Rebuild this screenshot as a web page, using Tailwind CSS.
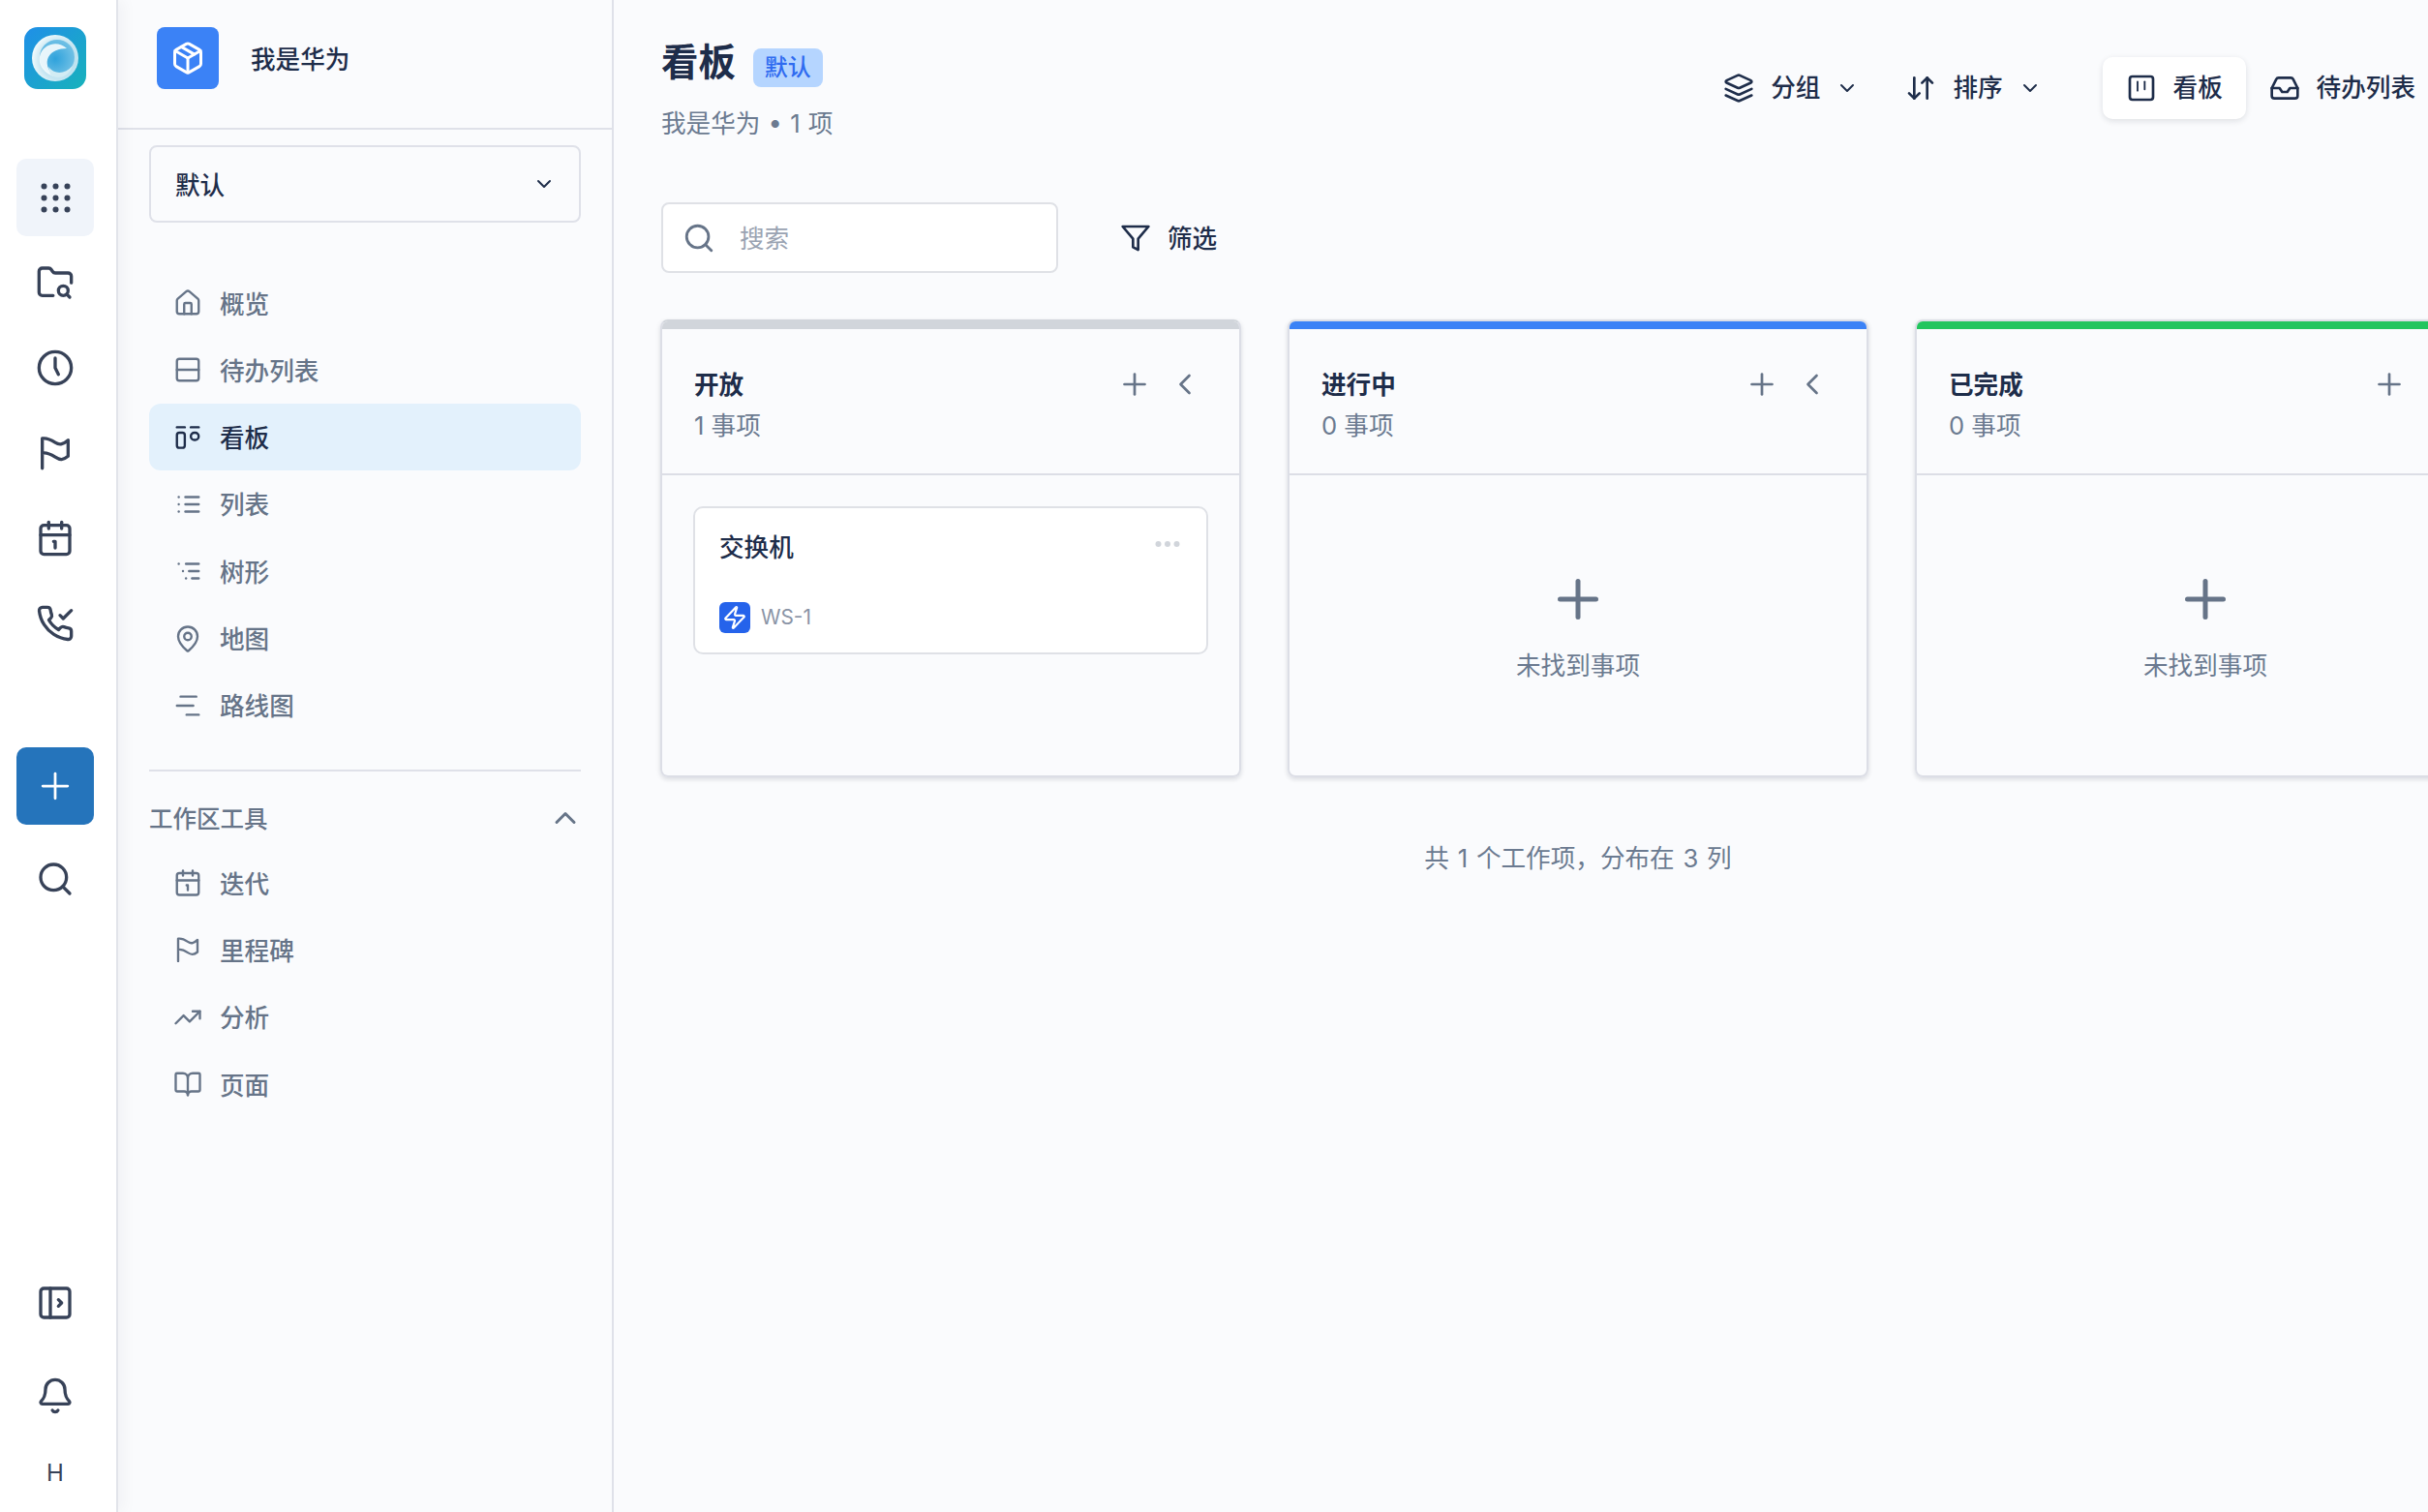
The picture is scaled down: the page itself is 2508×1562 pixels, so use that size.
<!DOCTYPE html>
<html lang="zh-CN">
<head>
  <meta charset="UTF-8">
  <meta name="viewport" content="width=device-width, initial-scale=1.0">
  <title>看板</title>
  <script src="https://cdn.jsdelivr.net/npm/@tailwindcss/browser@4"></script>
</head>
<body class="bg-[#fafbfd]">
<div class="flex w-[2508px] h-[1562px] overflow-hidden bg-[#fafbfd] text-[#1e2d4a] text-[25.6px] leading-10 font-[Inter,'Noto_Sans_CJK_SC',sans-serif]">

  <!-- icon rail -->
  <aside class="relative z-10 flex flex-col items-start w-[122px] shrink-0 pt-7 pl-[17px] bg-white border-r-2 border-[#e2e4ea] shadow-[6px_0_14px_rgba(15,23,42,0.04)] text-[#374258]">
    <svg class="w-16 h-16 ml-2" viewBox="0 0 64 64">
      <defs>
        <linearGradient id="logoBg" x1="0" y1="0" x2="1" y2="1"><stop offset="0" stop-color="#1f8fe8"/><stop offset="1" stop-color="#18b2bb"/></linearGradient>
        <radialGradient id="logoBall" cx="0.6" cy="0.55" r="0.6"><stop offset="0" stop-color="#9fd5ea"/><stop offset="0.7" stop-color="#c6e6f2"/><stop offset="1" stop-color="#f0fafc"/></radialGradient>
        <radialGradient id="logoEye" cx="0.45" cy="0.55" r="0.6"><stop offset="0" stop-color="#2ea2dc"/><stop offset="1" stop-color="#76c3e6"/></radialGradient>
      </defs>
      <rect width="64" height="64" rx="14" fill="url(#logoBg)"/>
      <circle cx="32" cy="32" r="24" fill="url(#logoBall)"/>
      <circle cx="34" cy="31" r="18" fill="url(#logoEye)"/>
      <path d="M44 22C36 14 22 16 17 27c-4 10 2 20 14 24-7-7-9-14-6-20 3-6 11-9 19-9z" fill="#f4fbfd" opacity="0.92"/>
      <path d="M25 41c6 8 17 8 25-1-4 12-16 15-23 9z" fill="#d2ecf4"/>
    </svg>

    <nav class="flex flex-col gap-2 mt-[72px]">
      <button class="flex items-center justify-center w-20 h-20 rounded-[10px] bg-[#f0f4fa]">
        <svg class="w-[33px] h-[33px]" viewBox="0 0 33 33" fill="currentColor"><circle cx="4.500" cy="4.500" r="3"/><circle cx="16.500" cy="4.500" r="3"/><circle cx="28.500" cy="4.500" r="3"/><circle cx="4.500" cy="16.500" r="3"/><circle cx="16.500" cy="16.500" r="3"/><circle cx="28.500" cy="16.500" r="3"/><circle cx="4.500" cy="28.500" r="3"/><circle cx="16.500" cy="28.500" r="3"/><circle cx="28.500" cy="28.500" r="3"/></svg>
      </button>
      <button class="flex items-center justify-center w-20 h-20">
        <svg class="w-10 h-10" viewBox="0 0 24 24" fill="none" stroke="currentColor" stroke-width="2" stroke-linecap="round" stroke-linejoin="round"><path d="M10.700 20H4a2 2 0 0 1-2-2V5a2 2 0 0 1 2-2h3.900a2 2 0 0 1 1.690.9l.81 1.200a2 2 0 0 0 1.670.9H20a2 2 0 0 1 2 2v4.100"/><circle cx="17" cy="17" r="3"/><path d="m21 21-1.900-1.900"/></svg>
      </button>
      <button class="flex items-center justify-center w-20 h-20">
        <svg class="w-10 h-10" viewBox="0 0 24 24" fill="none" stroke="currentColor" stroke-width="2" stroke-linecap="round" stroke-linejoin="round"><circle cx="12" cy="12" r="10"/><path d="M12 6v6l2 4"/></svg>
      </button>
      <button class="flex items-center justify-center w-20 h-20">
        <svg class="w-10 h-10" viewBox="0 0 24 24" fill="none" stroke="currentColor" stroke-width="2" stroke-linecap="round" stroke-linejoin="round"><path d="M4 21.500V3c3-.5 5 .5 8 2.500s5 1 8-1.500v10c-3 2.500-5 2.500-8 .5s-5-3-8-2.500"/></svg>
      </button>
      <button class="flex items-center justify-center w-20 h-20">
        <svg class="w-10 h-10" viewBox="0 0 24 24" fill="none" stroke="currentColor" stroke-width="2" stroke-linecap="round" stroke-linejoin="round"><path d="M11 14h1v4"/><path d="M16 2v4"/><path d="M3 10h18"/><path d="M8 2v4"/><rect x="3" y="4" width="18" height="18" rx="2"/></svg>
      </button>
      <button class="flex items-center justify-center w-20 h-20">
        <svg class="w-10 h-10" viewBox="0 0 24 24" fill="none" stroke="currentColor" stroke-width="2" stroke-linecap="round" stroke-linejoin="round"><path d="M22 16.920v3a2 2 0 0 1-2.180 2 19.790 19.790 0 0 1-8.630-3.070 19.500 19.500 0 0 1-6-6 19.790 19.790 0 0 1-3.070-8.670A2 2 0 0 1 4.110 2h3a2 2 0 0 1 2 1.720 12.840 12.840 0 0 0 .7 2.810 2 2 0 0 1-.45 2.110L8.090 9.910a16 16 0 0 0 6 6l1.270-1.270a2 2 0 0 1 2.110-.45 12.840 12.840 0 0 0 2.810.7A2 2 0 0 1 22 16.920z"/><path d="m15 7 2 2 5-5"/></svg>
      </button>
    </nav>

    <button class="flex items-center justify-center w-20 h-20 mt-[88px] rounded-[10px] bg-[#2574bb] text-white">
      <svg class="w-11 h-11" viewBox="0 0 24 24" fill="none" stroke="currentColor" stroke-width="1.500" stroke-linecap="round"><path d="M5 12h14"/><path d="M12 5v14"/></svg>
    </button>
    <button class="flex items-center justify-center w-20 h-20 mt-4">
      <svg class="w-10 h-10" viewBox="0 0 24 24" fill="none" stroke="currentColor" stroke-width="2" stroke-linecap="round" stroke-linejoin="round"><circle cx="11" cy="11" r="8"/><path d="m21 21-4.300-4.300"/></svg>
    </button>

    <button class="flex items-center justify-center w-20 h-20 mt-auto">
      <svg class="w-10 h-10" viewBox="0 0 24 24" fill="none" stroke="currentColor" stroke-width="2" stroke-linecap="round" stroke-linejoin="round"><rect x="3" y="3" width="18" height="18" rx="2"/><path d="M9 3v18"/><path d="m14 10 2 2-2 2"/></svg>
    </button>
    <button class="flex items-center justify-center w-20 h-20 mt-4">
      <svg class="w-10 h-10" viewBox="0 0 24 24" fill="none" stroke="currentColor" stroke-width="2" stroke-linecap="round" stroke-linejoin="round"><path d="M10.268 21a2 2 0 0 0 3.464 0"/><path d="M3.262 15.326A1 1 0 0 0 4 17h16a1 1 0 0 0 .74-1.673C19.410 13.956 18 12.499 18 8A6 6 0 0 0 6 8c0 4.499-1.411 5.956-2.738 7.326"/></svg>
    </button>
    <div class="flex items-center justify-center w-20 h-20 text-[24px]">H</div>
  </aside>

  <!-- project sidebar -->
  <aside class="flex flex-col w-[512px] shrink-0 border-r-2 border-[#dfe1e9] text-[#667488]">
    <div class="flex gap-[33px] h-[134px] shrink-0 pt-7 pl-10 border-b-2 border-[#dfe1e9]">
      <div class="flex items-center justify-center w-16 h-16 rounded-lg bg-[#3b82f6] text-white">
        <svg class="w-9 h-9" viewBox="0 0 24 24" fill="none" stroke="currentColor" stroke-width="2" stroke-linecap="round" stroke-linejoin="round"><path d="M11 21.730a2 2 0 0 0 2 0l7-4A2 2 0 0 0 21 16V8a2 2 0 0 0-1-1.730l-7-4a2 2 0 0 0-2 0l-7 4A2 2 0 0 0 3 8v8a2 2 0 0 0 1 1.730z"/><path d="M12 22V12"/><path d="m3.300 7 8.700 5 8.700-5"/><path d="m7.500 4.270 9 5.150"/></svg>
      </div>
      <span class="h-16 pt-[1.5px] leading-16 font-medium text-[#1e2d4a]">我是华为</span>
    </div>

    <div class="flex items-center justify-between h-20 mt-4 mx-8 pl-[25px] pr-6 rounded-lg border-2 border-[#dfe1e9] font-medium text-[#1e2d4a]">
      <span class="pt-[3px]">默认</span>
      <svg class="w-6 h-6" viewBox="0 0 24 24" fill="none" stroke="currentColor" stroke-width="2" stroke-linecap="round" stroke-linejoin="round"><path d="m6 9 6 6 6-6"/></svg>
    </div>

    <nav class="flex flex-col mt-[48.4px] mx-8 font-medium">
      <a class="flex items-center gap-[18px] h-[69.3px] pl-[25px]">
        <svg class="w-[30px] h-[30px] shrink-0" viewBox="0 0 24 24" fill="none" stroke="currentColor" stroke-width="1.900" stroke-linecap="round" stroke-linejoin="round"><path d="M15 21v-8a1 1 0 0 0-1-1h-4a1 1 0 0 0-1 1v8"/><path d="M3 10a2 2 0 0 1 .709-1.528l7-5.999a2 2 0 0 1 2.582 0l7 5.999A2 2 0 0 1 21 10v9a2 2 0 0 1-2 2H5a2 2 0 0 1-2-2z"/></svg>
        <span class="pt-[3px]">概览</span>
      </a>
      <a class="flex items-center gap-[18px] h-[69.3px] pl-[25px]">
        <svg class="w-[30px] h-[30px] shrink-0" viewBox="0 0 24 24" fill="none" stroke="currentColor" stroke-width="1.900" stroke-linecap="round" stroke-linejoin="round"><rect x="3" y="3" width="18" height="18" rx="2"/><path d="M3 12h18"/></svg>
        <span class="pt-[3px]">待办列表</span>
      </a>
      <a class="flex items-center gap-[18px] h-[69.3px] pl-[25px] rounded-xl bg-[#e3f1fc] text-[#1e2d4a]">
        <svg class="w-[30px] h-[30px] shrink-0" viewBox="0 0 24 24" fill="none" stroke="currentColor" stroke-width="1.900" stroke-linecap="round" stroke-linejoin="round"><path d="M3 3.500h6.500"/><path d="M14.500 3.500H21"/><rect x="3" y="8" width="6.500" height="12.500" rx="2"/><rect x="14.500" y="8" width="6.500" height="6" rx="3"/></svg>
        <span class="pt-[3px]">看板</span>
      </a>
      <a class="flex items-center gap-[18px] h-[69.3px] pl-[25px]">
        <svg class="w-[30px] h-[30px] shrink-0" viewBox="0 0 24 24" fill="none" stroke="currentColor" stroke-width="1.900" stroke-linecap="round" stroke-linejoin="round"><path d="M4.500 6h.01"/><path d="M4.500 12h.01"/><path d="M4.500 18h.01"/><path d="M10 6h11"/><path d="M10 12h11"/><path d="M10 18h11"/></svg>
        <span class="pt-[3px]">列表</span>
      </a>
      <a class="flex items-center gap-[18px] h-[69.3px] pl-[25px]">
        <svg class="w-[30px] h-[30px] shrink-0" viewBox="0 0 24 24" fill="none" stroke="currentColor" stroke-width="1.900" stroke-linecap="round" stroke-linejoin="round"><path d="M4.500 6h.01"/><path d="M8 12h.01"/><path d="M10.500 18h.01"/><path d="M10.500 6H21"/><path d="M13 12h8"/><path d="M15.500 18H21"/></svg>
        <span class="pt-[3px]">树形</span>
      </a>
      <a class="flex items-center gap-[18px] h-[69.3px] pl-[25px]">
        <svg class="w-[30px] h-[30px] shrink-0" viewBox="0 0 24 24" fill="none" stroke="currentColor" stroke-width="1.900" stroke-linecap="round" stroke-linejoin="round"><path d="M20 10c0 4.993-5.539 10.193-7.399 11.799a1 1 0 0 1-1.202 0C9.539 20.193 4 14.993 4 10a8 8 0 0 1 16 0"/><circle cx="12" cy="10" r="3"/></svg>
        <span class="pt-[3px]">地图</span>
      </a>
      <a class="flex items-center gap-[18px] h-[69.3px] pl-[25px]">
        <svg class="w-[30px] h-[30px] shrink-0" viewBox="0 0 24 24" fill="none" stroke="currentColor" stroke-width="1.900" stroke-linecap="round" stroke-linejoin="round"><path d="M6 4.500h13"/><path d="M3 12h13.500"/><path d="M11 19.500h10"/></svg>
        <span class="pt-[3px]">路线图</span>
      </a>
    </nav>

    <div class="mt-8 mx-8 border-t-2 border-[#dfe1e9]"></div>

    <div class="flex items-center justify-between h-12 mt-6 mx-8 text-[24.5px] font-medium">
      <span class="pt-[2px]">工作区工具</span>
      <svg class="w-9 h-9 -mr-0.5" viewBox="0 0 24 24" fill="none" stroke="currentColor" stroke-width="2" stroke-linecap="round" stroke-linejoin="round"><path d="m18 15-6-6-6 6"/></svg>
    </div>

    <nav class="flex flex-col mt-2 mx-8 font-medium">
      <a class="flex items-center gap-[18px] h-[69.3px] pl-[25px]">
        <svg class="w-[30px] h-[30px] shrink-0" viewBox="0 0 24 24" fill="none" stroke="currentColor" stroke-width="1.900" stroke-linecap="round" stroke-linejoin="round"><path d="M11 14h1v4"/><path d="M16 2v4"/><path d="M3 10h18"/><path d="M8 2v4"/><rect x="3" y="4" width="18" height="18" rx="2"/></svg>
        <span class="pt-[3px]">迭代</span>
      </a>
      <a class="flex items-center gap-[18px] h-[69.3px] pl-[25px]">
        <svg class="w-[30px] h-[30px] shrink-0" viewBox="0 0 24 24" fill="none" stroke="currentColor" stroke-width="1.900" stroke-linecap="round" stroke-linejoin="round"><path d="M4 21.500V3c3-.5 5 .5 8 2.500s5 1 8-1.500v10c-3 2.500-5 2.500-8 .5s-5-3-8-2.500"/></svg>
        <span class="pt-[3px]">里程碑</span>
      </a>
      <a class="flex items-center gap-[18px] h-[69.3px] pl-[25px]">
        <svg class="w-[30px] h-[30px] shrink-0" viewBox="0 0 24 24" fill="none" stroke="currentColor" stroke-width="1.900" stroke-linecap="round" stroke-linejoin="round"><path d="M22 7 13.500 15.500 8.500 10.500 2 17"/><path d="M16 7h6v6"/></svg>
        <span class="pt-[3px]">分析</span>
      </a>
      <a class="flex items-center gap-[18px] h-[69.3px] pl-[25px]">
        <svg class="w-[30px] h-[30px] shrink-0" viewBox="0 0 24 24" fill="none" stroke="currentColor" stroke-width="1.900" stroke-linecap="round" stroke-linejoin="round"><path d="M12 7v14"/><path d="M3 18a1 1 0 0 1-1-1V4a1 1 0 0 1 1-1h5a4 4 0 0 1 4 4 4 4 0 0 1 4-4h5a1 1 0 0 1 1 1v13a1 1 0 0 1-1 1h-6a3 3 0 0 0-3 3 3 3 0 0 0-3-3z"/></svg>
        <span class="pt-[3px]">页面</span>
      </a>
    </nav>
  </aside>

  <!-- main -->
  <main class="flex-1 min-w-0 overflow-hidden pl-[49px]">
    <header class="flex items-start h-[147px]">
      <div class="pt-8">
        <div class="flex items-center gap-[18px] h-16">
          <h1 class="text-[38.4px] font-semibold leading-16">看板</h1>
          <span class="flex items-center justify-center w-[72px] h-10 mt-3 rounded-lg bg-[#b5d5ff] text-[#2f6bf0] text-[24px] font-medium">默认</span>
        </div>
        <p class="mt-3 [word-spacing:1px] text-[#6b7a90]">我是华为 • 1 项</p>
      </div>

      <div class="flex items-center h-16 mt-[59px] ml-auto pr-[13px] font-medium">
        <button class="flex items-center">
          <svg class="w-8 h-8" viewBox="0 0 24 24" fill="none" stroke="currentColor" stroke-width="2" stroke-linecap="round" stroke-linejoin="round"><path d="m12.830 2.180a2 2 0 0 0-1.660 0L2.600 6.080a1 1 0 0 0 0 1.830l8.580 3.910a2 2 0 0 0 1.660 0l8.580-3.900a1 1 0 0 0 0-1.830Z"/><path d="m22 17.650-9.170 4.160a2 2 0 0 1-1.660 0L2 17.650"/><path d="m22 12.650-9.170 4.160a2 2 0 0 1-1.660 0L2 12.650"/></svg>
          <span class="ml-[17px]">分组</span>
          <svg class="w-6 h-6 ml-4" viewBox="0 0 24 24" fill="none" stroke="currentColor" stroke-width="2" stroke-linecap="round" stroke-linejoin="round"><path d="m6 9 6 6 6-6"/></svg>
        </button>
        <button class="flex items-center ml-12">
          <svg class="w-8 h-8" viewBox="0 0 24 24" fill="none" stroke="currentColor" stroke-width="2" stroke-linecap="round" stroke-linejoin="round"><path d="m3 16 4 4 4-4"/><path d="M7 20V4"/><path d="m21 8-4-4-4 4"/><path d="M17 4v16"/></svg>
          <span class="ml-[17px]">排序</span>
          <svg class="w-6 h-6 ml-4" viewBox="0 0 24 24" fill="none" stroke="currentColor" stroke-width="2" stroke-linecap="round" stroke-linejoin="round"><path d="m6 9 6 6 6-6"/></svg>
        </button>
        <button class="flex items-center w-[148px] h-16 ml-[63px] pl-6 rounded-[10px] bg-white shadow-[0_2px_6px_rgba(15,23,42,0.12)]">
          <svg class="w-8 h-8" viewBox="0 0 24 24" fill="none" stroke="currentColor" stroke-width="2" stroke-linecap="round" stroke-linejoin="round"><rect x="3" y="3" width="18" height="18" rx="2"/><path d="M9 7v7" stroke-width="1.400"/><path d="M14.500 7v6" stroke-width="1.400"/></svg>
          <span class="ml-[17px]">看板</span>
        </button>
        <button class="flex items-center ml-6">
          <svg class="w-8 h-8" viewBox="0 0 24 24" fill="none" stroke="currentColor" stroke-width="2" stroke-linecap="round" stroke-linejoin="round"><path d="M22 12h-6l-2 3h-4l-2-3H2"/><path d="M5.450 5.110 2 12v6a2 2 0 0 0 2 2h16a2 2 0 0 0 2-2v-6l-3.450-6.890A2 2 0 0 0 16.760 4H7.240a2 2 0 0 0-1.790 1.110z"/></svg>
          <span class="ml-[17px]">待办列表</span>
        </button>
      </div>
    </header>

    <div class="flex items-center mt-[62px]">
      <label class="flex items-center w-[410px] h-[73px] pl-[22px] rounded-lg border-2 border-[#dfe1e6] bg-white">
        <svg class="w-[34px] h-[34px] shrink-0 -ml-0.5 text-[#667488]" viewBox="0 0 24 24" fill="none" stroke="currentColor" stroke-width="2" stroke-linecap="round" stroke-linejoin="round"><circle cx="11" cy="11" r="8"/><path d="m21 21-4.300-4.300"/></svg>
        <input class="ml-[25px] w-[300px] pt-[3px] bg-transparent outline-none placeholder:text-[#9aa3b2]" placeholder="搜索">
      </label>
      <button class="flex items-center ml-16 font-medium">
        <svg class="w-8 h-8 text-[#1e2d4a]" viewBox="0 0 24 24" fill="none" stroke="currentColor" stroke-width="2" stroke-linecap="round" stroke-linejoin="round"><polygon points="22 3 2 3 10 12.460 10 19 14 21 14 12.460 22 3"/></svg>
        <span class="ml-[17px] pt-[3px]">筛选</span>
      </button>
    </div>

    <div class="flex gap-12 w-fit mt-12 -ml-px">
      <!-- 开放 -->
      <section class="w-[600px] h-[473px] shrink-0 overflow-hidden rounded-lg border-2 border-[#dcdee6] border-t-[#d1d5db] shadow-[0_2px_5px_rgba(15,23,42,0.14)]">
        <div class="h-2 bg-[#d1d5db]"></div>
        <div class="flex justify-between h-[151px] pt-[38px] pl-[33px] pr-[38px] border-b-2 border-[#dcdee6]">
          <div>
            <h2 class="font-semibold">开放</h2>
            <p class="mt-0.5 text-[#6b7a90]">1 事项</p>
          </div>
          <div class="flex items-center gap-4 h-10 -mt-px text-[#667488]">
            <svg class="w-9 h-9" viewBox="0 0 24 24" fill="none" stroke="currentColor" stroke-width="1.800" stroke-linecap="round" stroke-linejoin="round"><path d="M5 12h14"/><path d="M12 5v14"/></svg>
            <svg class="w-9 h-9" viewBox="0 0 24 24" fill="none" stroke="currentColor" stroke-width="1.800" stroke-linecap="round" stroke-linejoin="round"><path d="m15 18-6-6 6-6"/></svg>
          </div>
        </div>
        <div class="p-8">
          <article class="h-[153px] pl-[25px] pr-6 pt-[21px] rounded-[10px] border-2 border-[#dfe1e6] bg-white">
            <div class="flex justify-between">
              <h3 class="font-medium">交换机</h3>
              <svg class="w-[26px] h-2 mt-3 mr-[3px] text-[#d1d5db]" viewBox="0 0 26 8" fill="currentColor"><circle cx="3.500" cy="4" r="3"/><circle cx="13" cy="4" r="3"/><circle cx="22.500" cy="4" r="3"/></svg>
            </div>
            <div class="flex items-center gap-[11px] mt-9">
              <div class="flex items-center justify-center w-8 h-8 rounded-md bg-[#2563eb] text-white">
                <svg class="w-[26px] h-[26px]" viewBox="0 0 24 24" fill="none" stroke="currentColor" stroke-width="2" stroke-linecap="round" stroke-linejoin="round"><path d="M4 14a1 1 0 0 1-.78-1.630l9.900-10.200a.5.5 0 0 1 .86.46l-1.920 6.020A1 1 0 0 0 13 10h7a1 1 0 0 1 .78 1.630l-9.900 10.200a.5.5 0 0 1-.86-.46l1.920-6.020A1 1 0 0 0 11 14z"/></svg>
              </div>
              <span class="text-[20.8px] leading-8 text-[#8a94a6]">WS-1</span>
            </div>
          </article>
        </div>
      </section>

      <!-- 进行中 -->
      <section class="w-[600px] h-[473px] shrink-0 overflow-hidden rounded-lg border-2 border-[#dcdee6] shadow-[0_2px_5px_rgba(15,23,42,0.14)]">
        <div class="h-2 bg-[#3b82f6]"></div>
        <div class="flex justify-between h-[151px] pt-[38px] pl-[33px] pr-[38px] border-b-2 border-[#dcdee6]">
          <div>
            <h2 class="font-semibold">进行中</h2>
            <p class="mt-0.5 text-[#6b7a90]">0 事项</p>
          </div>
          <div class="flex items-center gap-4 h-10 -mt-px text-[#667488]">
            <svg class="w-9 h-9" viewBox="0 0 24 24" fill="none" stroke="currentColor" stroke-width="1.800" stroke-linecap="round" stroke-linejoin="round"><path d="M5 12h14"/><path d="M12 5v14"/></svg>
            <svg class="w-9 h-9" viewBox="0 0 24 24" fill="none" stroke="currentColor" stroke-width="1.800" stroke-linecap="round" stroke-linejoin="round"><path d="m15 18-6-6 6-6"/></svg>
          </div>
        </div>
        <div class="flex flex-col items-center pt-[107px] text-[#6b7a90]">
          <svg class="w-[42px] h-[42px] text-[#667488]" viewBox="0 0 42 42" fill="none" stroke="currentColor" stroke-width="5" stroke-linecap="round"><path d="M2.500 21h37"/><path d="M21 2.500v37"/></svg>
          <p class="mt-7">未找到事项</p>
        </div>
      </section>

      <!-- 已完成 -->
      <section class="w-[600px] h-[473px] shrink-0 overflow-hidden rounded-lg border-2 border-[#dcdee6] shadow-[0_2px_5px_rgba(15,23,42,0.14)]">
        <div class="h-2 bg-[#22c55e]"></div>
        <div class="flex justify-between h-[151px] pt-[38px] pl-[33px] pr-[38px] border-b-2 border-[#dcdee6]">
          <div>
            <h2 class="font-semibold">已完成</h2>
            <p class="mt-0.5 text-[#6b7a90]">0 事项</p>
          </div>
          <div class="flex items-center gap-4 h-10 -mt-px mr-[52px] text-[#667488]">
            <svg class="w-9 h-9" viewBox="0 0 24 24" fill="none" stroke="currentColor" stroke-width="1.800" stroke-linecap="round" stroke-linejoin="round"><path d="M5 12h14"/><path d="M12 5v14"/></svg>
          </div>
        </div>
        <div class="flex flex-col items-center pt-[107px] text-[#6b7a90]">
          <svg class="w-[42px] h-[42px] text-[#667488]" viewBox="0 0 42 42" fill="none" stroke="currentColor" stroke-width="5" stroke-linecap="round"><path d="M2.500 21h37"/><path d="M21 2.500v37"/></svg>
          <p class="mt-7">未找到事项</p>
        </div>
      </section>
    </div>

    <p class="w-[1894px] mt-[64px] text-center [word-spacing:1.600px] text-[#6b7a90]">共 1 个工作项，分布在 3 列</p>
  </main>
</div>
</body>
</html>
